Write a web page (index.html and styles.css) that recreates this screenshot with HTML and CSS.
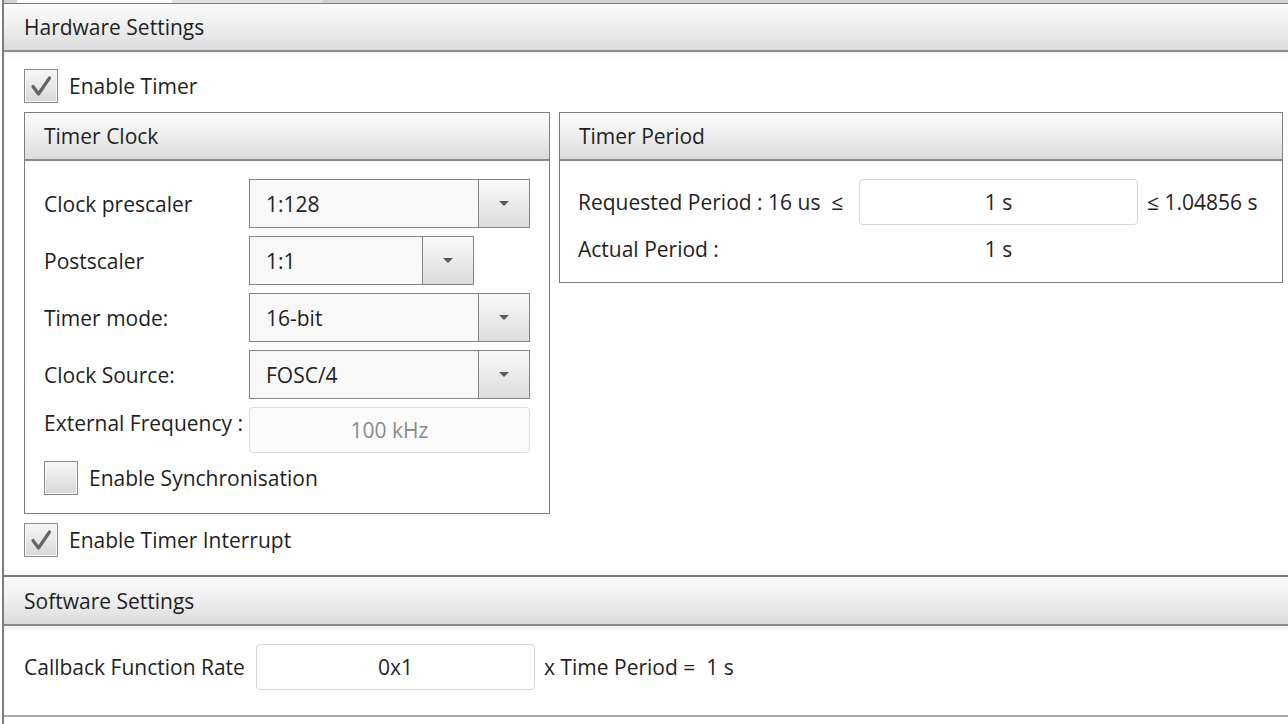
FILE: index.html
```html
<!DOCTYPE html>
<html lang="en">
<head>
<meta charset="utf-8">
<title>Timer Settings</title>
<link rel="stylesheet" href="styles.css">
</head>
<body>
<div class="page">
  <div class="tabstrip"><div class="tab"></div><div class="tab tab-off"></div></div>

  <section class="section">
    <div class="sec-head">Hardware Settings</div>
    <div class="sec-body hw-body">
      <div class="check-row">
        <span class="checkbox checked"><svg viewBox="0 0 34 34" width="34" height="34"><polyline points="9,17.5 14.5,25 25.5,9" fill="none" stroke="#656565" stroke-width="3.2" stroke-linecap="round" stroke-linejoin="round"/></svg></span>
        <span class="check-label">Enable Timer</span>
      </div>

      <div class="panels">
        <div class="panel clock-panel">
          <div class="panel-head">Timer Clock</div>
          <div class="panel-body clock-body">
            <div class="form-row">
              <span class="row-label">Clock prescaler</span>
              <div class="dropdown wide"><span class="dd-value">1:128</span><span class="dd-btn"><span class="tri"></span></span></div>
            </div>
            <div class="form-row">
              <span class="row-label">Postscaler</span>
              <div class="dropdown narrow"><span class="dd-value">1:1</span><span class="dd-btn"><span class="tri"></span></span></div>
            </div>
            <div class="form-row">
              <span class="row-label">Timer mode:</span>
              <div class="dropdown wide"><span class="dd-value">16-bit</span><span class="dd-btn"><span class="tri"></span></span></div>
            </div>
            <div class="form-row">
              <span class="row-label">Clock Source:</span>
              <div class="dropdown wide"><span class="dd-value">FOSC/4</span><span class="dd-btn"><span class="tri"></span></span></div>
            </div>
            <div class="form-row ext-row">
              <span class="row-label ext-label">External Frequency :</span>
              <div class="textbox disabled">100 kHz</div>
            </div>
            <div class="check-row sync-row">
              <span class="checkbox"></span>
              <span class="check-label">Enable Synchronisation</span>
            </div>
          </div>
        </div>

        <div class="panel period-panel">
          <div class="panel-head">Timer Period</div>
          <div class="panel-body period-body">
            <span class="p-label">Requested Period : 16 us&nbsp; ≤</span>
            <div class="textbox period-input">1 s</div>
            <span class="p-suffix">≤ 1.04856 s</span>
            <span class="p-label actual-label">Actual Period :</span>
            <span class="p-value">1 s</span>
          </div>
        </div>
      </div>

      <div class="check-row">
        <span class="checkbox checked"><svg viewBox="0 0 34 34" width="34" height="34"><polyline points="9,17.5 14.5,25 25.5,9" fill="none" stroke="#656565" stroke-width="3.2" stroke-linecap="round" stroke-linejoin="round"/></svg></span>
        <span class="check-label">Enable Timer Interrupt</span>
      </div>
    </div>
  </section>

  <section class="section sw-section">
    <div class="sec-head">Software Settings</div>
    <div class="sec-body sw-body">
      <span class="sw-label">Callback Function Rate</span>
      <div class="textbox sw-input">0x1</div>
      <span class="sw-suffix">x Time Period =&nbsp; 1 s</span>
    </div>
  </section>
</div>
</body>
</html>
```

FILE: styles.css
```css
html, body {
  margin: 0;
  padding: 0;
  background: #ffffff;
}

body {
  font-family: "Open Sans", "Noto Sans", "Liberation Sans", sans-serif;
  font-size: 21px;
  color: #1f1f1f;
  width: 1288px;
  height: 724px;
  overflow: hidden;
}

.page {
  margin-left: 2px;
  border-left: 2px solid #7d7d7d;
  height: 724px;
  box-sizing: border-box;
  background: #ffffff;
}

.tabstrip {
  height: 3px;
  display: flex;
  background: #d2d2d2;
}

.tab {
  margin-left: 13px;
  width: 155px;
  background: #ffffff;
}

.tab-off {
  margin-left: 0;
  width: 150px;
  background: #e2e2e2;
}

.section {
  display: flex;
  flex-direction: column;
}

.sec-head {
  height: 46px;
  border-top: 1px solid #7a7a7a;
  border-bottom: 2px solid #8a8a8a;
  background: linear-gradient(#fbfbfb, #f1f1f1 40%, #dcdcdc);
  padding-left: 20px;
  display: flex;
  align-items: center;
  box-sizing: content-box;
}

.sec-body {
  background: linear-gradient(#f2f2f2, #ffffff 6px);
}

.hw-body {
  padding: 17px 5px 18px 20px;
  display: flex;
  flex-direction: column;
  gap: 9px;
}

.check-row {
  display: flex;
  align-items: center;
  height: 34px;
}

.checkbox {
  width: 34px;
  height: 34px;
  box-sizing: border-box;
  border: 1px solid #8a8a8a;
  box-shadow: inset 0 0 0 1px #f6f6f6;
  background: linear-gradient(#f7f7f7, #e4e4e4 60%, #d8d8d8);
  display: block;
  flex: none;
  position: relative;
}

.checkbox svg {
  position: absolute;
  left: -1px;
  top: -1px;
}

.check-label {
  margin-left: 11px;
}

.panels {
  display: flex;
  gap: 9px;
  align-items: flex-start;
}

.panel {
  border: 1px solid #7f7f7f;
  background: #ffffff;
}

.clock-panel {
  width: 526px;
  box-sizing: border-box;
}

.period-panel {
  flex: 1;
}

.panel-head {
  height: 46px;
  border-bottom: 2px solid #8a8a8a;
  background: linear-gradient(#fbfbfb, #f1f1f1 40%, #dcdcdc);
  display: flex;
  align-items: center;
  padding-left: 19px;
}

.clock-body {
  padding: 18px 18px 18px 19px;
  display: flex;
  flex-direction: column;
}

.form-row {
  display: flex;
  align-items: center;
  height: 49px;
  margin-bottom: 8px;
}

.ext-row {
  height: 46px;
  margin-bottom: 8px;
  align-items: flex-start;
}

.ext-label {
  padding-top: 2px;
}

.row-label {
  width: 205px;
  flex: none;
}

.dropdown {
  height: 49px;
  box-sizing: border-box;
  border: 1px solid #858585;
  background: #f8f8f8;
  display: flex;
}

.dropdown.wide {
  width: 281px;
}

.dropdown.narrow {
  width: 225px;
}

.dd-value {
  flex: 1;
  display: flex;
  align-items: center;
  padding-left: 16px;
}

.dd-btn {
  width: 50px;
  border-left: 1px solid #858585;
  background: linear-gradient(#fafafa, #e9e9e9 55%, #dcdcdc);
  display: flex;
  align-items: center;
  justify-content: center;
}

.tri {
  width: 0;
  height: 0;
  border-left: 5px solid transparent;
  border-right: 5px solid transparent;
  border-top: 5px solid #5a5a5a;
}

.textbox {
  box-sizing: border-box;
  height: 46px;
  border: 1px solid #d6d6d6;
  border-radius: 4px;
  background: #ffffff;
  display: flex;
  align-items: center;
  justify-content: center;
}

.textbox.disabled {
  width: 281px;
  color: #8a8a8a;
  background: #fbfbfb;
  border-color: #dcdcdc;
}

.period-body {
  padding: 18px 0 20px 18px;
  display: grid;
  grid-template-columns: 272px 279px auto;
  column-gap: 9px;
  grid-template-rows: 46px 26px;
  row-gap: 11px;
  align-items: center;
}

.period-input {
  width: 279px;
}

.p-value {
  text-align: center;
}

.sw-section .sec-head {
  border-top: 2px solid #7a7a7a;
  height: 47px;
}

.sw-body {
  padding: 18px 0 25px 20px;
  display: flex;
  align-items: center;
  border-bottom: 2px solid #a9a9a9;
}

.sw-label {
  width: 232px;
  flex: none;
}

.sw-input {
  width: 279px;
}

.sw-suffix {
  margin-left: 9px;
}
```
